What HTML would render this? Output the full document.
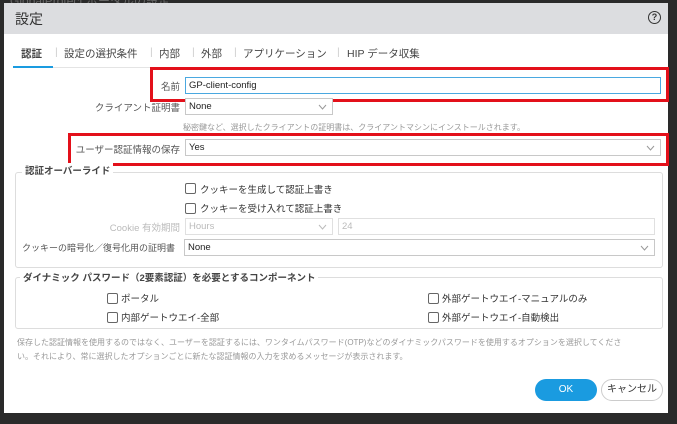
<!DOCTYPE html>
<html><head><meta charset="utf-8"><style>
*{margin:0;padding:0;box-sizing:border-box}
body{width:677px;height:424px;background:#2a2a2a;position:relative;overflow:hidden;font-family:"Liberation Sans","Noto Sans CJK JP",sans-serif;color:#333}
.a{position:absolute;white-space:nowrap}
.dlg{position:absolute;left:4px;top:3px;width:664px;height:410px;background:#fff}
.hdr{position:absolute;left:4px;top:3px;width:664px;height:31px;background:#dcdde0}
.lbl{font-size:9.5px;color:#555;text-align:right}
.in{position:absolute;border:1px solid #c8c8c8;background:#fff;font-size:9.5px;padding:2px 3px;color:#222;height:17px;line-height:12px}
.dis{color:#bbb;border-color:#e0e0e0}
.chev{position:absolute;right:5px;top:5px;width:9px;height:6px}
.red{position:absolute;border:3px solid #e3101a}
.fs{position:absolute;border:1px solid #ddd;border-radius:3px}
.cb{position:absolute;width:11px;height:11px;border:1px solid #666;border-radius:2px;background:#fff}
.t{font-size:9.5px;color:#333}
</style></head><body>
<div class="a" style="left:10px;top:-8px;font-size:12px;color:#666">GlobalProtect ポータルの設定</div>
<div class="dlg"></div>
<div class="hdr"></div>
<div class="a" style="left:15px;top:9px;font-size:14px;color:#333">設定</div>
<div class="a" style="left:648px;top:11px;width:13px;height:13px;border:1.5px solid #333;border-radius:50%;font-size:9px;font-weight:bold;text-align:center;line-height:10px">?</div>
<div class="a" style="left:0;top:46px;width:677px;font-size:10.5px;color:#444">
<span class="a" style="left:21px;font-weight:bold">認証</span>
<span class="a" style="left:55px;color:#ccc">|</span>
<span class="a" style="left:64px">設定の選択条件</span>
<span class="a" style="left:150px;color:#ccc">|</span>
<span class="a" style="left:159px">内部</span>
<span class="a" style="left:192px;color:#ccc">|</span>
<span class="a" style="left:201px">外部</span>
<span class="a" style="left:234px;color:#ccc">|</span>
<span class="a" style="left:243px">アプリケーション</span>
<span class="a" style="left:337px;color:#ccc">|</span>
<span class="a" style="left:347px">HIP データ収集</span>
</div>
<div class="a" style="left:13px;top:67px;width:650px;height:1px;background:#e4e4e4"></div>
<div class="a" style="left:13px;top:66px;width:40px;height:2px;background:#1a9be0"></div>

<div class="red" style="left:150px;top:67px;width:519px;height:35px"></div>
<div class="a lbl" style="left:100px;width:80px;top:79px">名前</div>
<div class="in" style="left:185px;top:77px;width:476px;border-color:#4aa8e0">GP-client-config</div>

<div class="a lbl" style="left:60px;width:120px;top:100px">クライアント証明書</div>
<div class="in" style="left:185px;top:98px;width:148px">None<svg class="chev" viewBox="0 0 9 6"><path d="M1 1L4.5 5L8 1" fill="none" stroke="#999" stroke-width="1"/></svg></div>
<div class="a" style="left:183px;top:122px;font-size:8px;color:#999">秘密鍵など、選択したクライアントの証明書は、クライアントマシンにインストールされます。</div>

<div class="red" style="left:68px;top:133px;width:601px;height:33px"></div>
<div class="a lbl" style="left:60px;width:120px;top:142px">ユーザー認証情報の保存</div>
<div class="in" style="left:185px;top:139px;width:476px">Yes<svg class="chev" viewBox="0 0 9 6"><path d="M1 1L4.5 5L8 1" fill="none" stroke="#999" stroke-width="1"/></svg></div>

<div class="fs" style="left:15px;top:172px;width:648px;height:96px"></div>
<div class="a" style="left:22px;top:163px;background:#fff;padding:0 3px;font-size:9.5px;font-weight:bold;color:#444">認証オーバーライド</div>
<div class="cb" style="left:185px;top:183px"></div><div class="a t" style="left:200px;top:182px">クッキーを生成して認証上書き</div>
<div class="cb" style="left:185px;top:203px"></div><div class="a t" style="left:200px;top:201px">クッキーを受け入れて認証上書き</div>
<div class="a lbl" style="left:60px;width:120px;top:220px;color:#bbb">Cookie 有効期間</div>
<div class="in dis" style="left:185px;top:218px;width:148px;color:#bbb">Hours<svg class="chev" viewBox="0 0 9 6"><path d="M1 1L4.5 5L8 1" fill="none" stroke="#bbb" stroke-width="1"/></svg></div>
<div class="in dis" style="left:338px;top:218px;width:317px;color:#bbb">24</div>
<div class="a lbl" style="left:22px;width:160px;top:241px;text-align:left;font-size:9px">クッキーの暗号化／復号化用の証明書</div>
<div class="in" style="left:184px;top:239px;width:471px">None<svg class="chev" viewBox="0 0 9 6"><path d="M1 1L4.5 5L8 1" fill="none" stroke="#999" stroke-width="1"/></svg></div>

<div class="fs" style="left:15px;top:277px;width:648px;height:52px"></div>
<div class="a" style="left:20px;top:270px;background:#fff;padding:0 3px;font-size:9.5px;font-weight:bold;color:#444">ダイナミック パスワード（2要素認証）を必要とするコンポーネント</div>
<div class="cb" style="left:107px;top:293px"></div><div class="a t" style="left:121px;top:291px">ポータル</div>
<div class="cb" style="left:107px;top:312px"></div><div class="a t" style="left:121px;top:310px">内部ゲートウエイ-全部</div>
<div class="cb" style="left:428px;top:293px"></div><div class="a t" style="left:442px;top:291px">外部ゲートウエイ-マニュアルのみ</div>
<div class="cb" style="left:428px;top:312px"></div><div class="a t" style="left:442px;top:310px">外部ゲートウエイ-自動検出</div>

<div class="a" style="left:17px;top:337px;font-size:8px;color:#999">保存した認証情報を使用するのではなく、ユーザーを認証するには、ワンタイムパスワード(OTP)などのダイナミックパスワードを使用するオプションを選択してくださ</div>
<div class="a" style="left:17px;top:351px;font-size:8px;color:#999">い。それにより、常に選択したオプションごとに新たな認証情報の入力を求めるメッセージが表示されます。</div>

<div class="a" style="left:535px;top:379px;width:62px;height:22px;background:#1a9be0;border-radius:11px;color:#fff;font-size:10px;text-align:center;line-height:22px">OK</div>
<div class="a" style="left:601px;top:379px;width:62px;height:22px;border:1px solid #ccc;border-radius:11px;color:#333;font-size:10px;text-align:center;line-height:20px">キャンセル</div>
</body></html>
